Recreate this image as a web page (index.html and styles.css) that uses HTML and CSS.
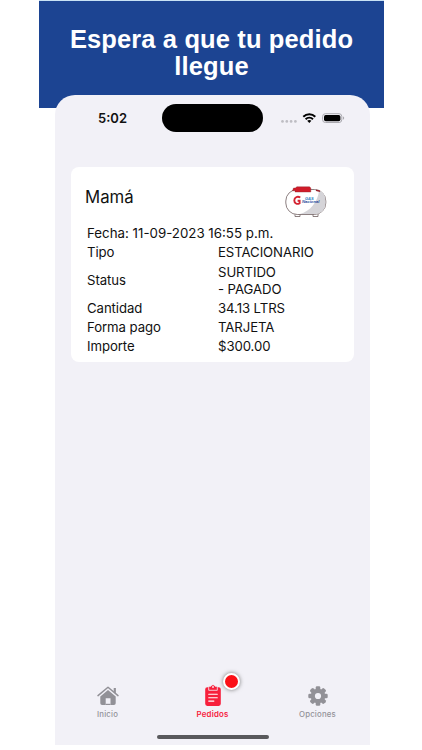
FILE: index.html
```html
<!DOCTYPE html>
<html lang="es">
<head>
<meta charset="utf-8">
<title>Pedidos</title>
<link rel="stylesheet" href="styles.css">
</head>
<body>
<main class="poster">
  <header class="banner">
    <h1>Espera a que tu pedido<br>llegue</h1>
  </header>
  <section class="phone">
    <div class="statusbar">
      <span class="time">5:02</span>
      <span class="island"></span>
      <svg class="signals" width="66" height="14" viewBox="0 0 66 14">
        <g fill="#bebdc3"><circle cx="2.5" cy="10.4" r="1.35"/><circle cx="6.8" cy="10.4" r="1.35"/><circle cx="11.1" cy="10.4" r="1.35"/><circle cx="15.4" cy="10.4" r="1.35"/></g>
        <g fill="none" stroke="#000" stroke-width="2"><path d="M23.3 5.8a8.6 8.6 0 0 1 12 0"/><path d="M25.6 8.2a5.4 5.4 0 0 1 7.4 0"/></g>
        <path d="M27.2 9.8a3.2 3.2 0 0 1 4.2 0l-2.1 2.2z"/>
        <rect x="42.6" y="2.7" width="19.2" height="8.8" rx="2.8" fill="none" stroke="#aaa9af"/>
        <rect x="44" y="4" width="16.4" height="6.2" rx="1.7"/>
        <path d="M63 5.5q1.2.4 1.2 1.6t-1.2 1.6z" fill="#aaa9af"/>
      </svg>
    </div>
    <article class="card">
      <div class="card-head">
        <h2>Mamá</h2>
        <svg class="tank" width="44" height="34" viewBox="0 0 44 34">
          <g fill="#fff" stroke="#705f61" stroke-width=".8"><path d="M11 28.500v3h5v-3M29 28.500v3h5v-3"/><rect x="1.800" y="4.500" width="40" height="25" rx="11.500"/></g>
          <path d="M35 5.600c4.500 1.500 6.400 5 6.400 10.400v2c0 7-4.500 11-10 11H16c10-2.500 18-12 19-23.400z" fill="#d5d4d8"/>
          <path d="M8.500 6l1-3h2l1.200-1.200h12.900l1.200 1.200v4H11V5.400z" fill="#d11b29" stroke="#8c2830" stroke-width=".4"/>
          <path d="M32 4.500l4.300 1-.5 1.600-3.800-1z" fill="#9a2630"/>
          <path d="M16.300 12.500c-3-1.700-6 .1-6 2.900s2.800 4.500 5.300 2.800v-2.400h-2" fill="none" stroke="#d42432" stroke-width="1.900"/>
          <text class="tank-small" x="21" y="14.500">GAS</text><text class="tank-brand" x="18" y="18.300">Nacional</text>
        </svg>
      </div>
      <p class="date">Fecha: 11-09-2023 16:55 p.m.</p>
      <dl class="details">
        <dt>Tipo</dt><dd>ESTACIONARIO</dd>
        <dt>Status</dt><dd>SURTIDO<br>- PAGADO</dd>
        <dt>Cantidad</dt><dd>34.13 LTRS</dd>
        <dt>Forma pago</dt><dd>TARJETA</dd>
        <dt>Importe</dt><dd>$300.00</dd>
      </dl>
    </article>
    <nav class="tabs">
      <a class="tab">
        <svg width="24" height="24" viewBox="0 0 24 24"><path d="M2 11.600L12 3.200l10 8.400" fill="none" stroke="currentColor" stroke-width="1.500" stroke-linecap="round" stroke-linejoin="round"/><path d="M17.700 4h2.200v5.500l-2.200-2z" fill="currentColor"/><path d="M4.300 12.400L12 6l7.700 6.400v6.800q0 1.800-1.800 1.800h-3.400v-6.800H9.700V21H6.100q-1.800 0-1.800-1.800z" fill="currentColor"/><path d="M9.700 19.800h4.800V21H9.700z" fill="currentColor"/></svg>
        <span>Inicio</span>
      </a>
      <a class="tab active">
        <svg width="24" height="24" viewBox="0 0 24 24"><path d="M6.300 3.200h11.400q2.100 0 2.100 2.100v14.500q0 2.100-2.100 2.100H6.300q-2.100 0-2.100-2.100V5.300q0-2.100 2.100-2.100z" fill="currentColor"/><path d="M7.700 6.300V3.300q0-1 1-1h1.100a2.300 2.300 0 0 1 4.400 0h1.100q1 0 1 1v3z" fill="currentColor" stroke="#f2f1f7" stroke-width=".8"/><circle cx="12" cy="3" r=".9" fill="#f2f1f7"/><path d="M7.700 10.300h8.600M7.700 13.700h8.600M7.700 17.100h5.200" stroke="#fff" stroke-width="1.100" stroke-linecap="round"/></svg>
        <span>Pedidos</span>
        <i class="badge"></i>
      </a>
      <a class="tab">
        <svg width="24" height="24" viewBox="0 0 24 24"><g fill="currentColor"><rect x="9.700" y="2.300" width="4.600" height="19.400" rx="1.300"/><rect x="9.700" y="2.300" width="4.600" height="19.400" rx="1.300" transform="rotate(45 12 12)"/><rect x="9.700" y="2.300" width="4.600" height="19.400" rx="1.300" transform="rotate(90 12 12)"/><rect x="9.700" y="2.300" width="4.600" height="19.400" rx="1.300" transform="rotate(135 12 12)"/><circle cx="12" cy="12" r="7.300"/></g><circle cx="12" cy="12" r="3.100" fill="#f2f1f7"/></svg>
        <span>Opciones</span>
      </a>
    </nav>
    <div class="home-bar"></div>
  </section>
</main>
</body>
</html>
```
FILE: styles.css
```css
* { box-sizing: border-box; }
body { margin: 0; background: #fff; color: #111; font-family: Inter, "Liberation Sans", sans-serif; overflow: hidden; }
h1, h2, p, dl, dd { margin: 0; font-weight: 400; }
.poster { width: 345px; height: 750px; margin-left: 39px; }
.banner { height: 108px; padding-top: 25px; background: #1c4492; border-top: 1px solid #c8e2f5; text-align: center; }
h1 { color: #fff; font: bold 25.5px/27px "Liberation Sans", Arial, sans-serif; letter-spacing: .12px; }
.phone { display: flex; flex-direction: column; width: 315px; height: 650px; margin: -13px auto 0 16px; border-radius: 20px 20px 0 0; background: #f2f1f7; }
.statusbar { display: grid; grid-template-columns: 107px 101px 1fr; align-items: center; height: 72px; padding-bottom: 27px; }
.time { padding-left: 43px; font-size: 13px; font-weight: 600; }
.island { width: 101px; height: 28px; border-radius: 14px; background: #000; }
.signals { margin-left: 17px; }
.card { width: 283px; height: 195px; margin-left: 16px; border-radius: 8px; background: #fff; }
.card-head { display: flex; justify-content: space-between; height: 58px; padding: 18px 26px 0 14px; }
h2 { font-size: 16.8px; line-height: 25px; }
.tank-small { font: italic bold 4px "Liberation Sans", sans-serif; fill: #277bc0; }
.tank-brand { font: italic bold 4.2px "Liberation Sans", sans-serif; fill: #244b9b; }
.date { padding-left: 16px; font-size: 13.3px; line-height: 17px; white-space: nowrap; }
.details { display: grid; grid-template-columns: 131px 1fr; align-items: center; row-gap: 2.3px; margin-top: 2.3px; padding-left: 16px; font-size: 13.2px; line-height: 17px; letter-spacing: -.08px; }
.tabs { display: grid; grid-template-columns: repeat(3, 1fr); height: 51px; margin-top: auto; }
.tab { position: relative; display: flex; flex-direction: column; align-items: center; color: #929197; font-size: 7.8px; font-weight: 500; line-height: 10px; letter-spacing: .2px; }
.tab span { margin-top: 1px; }
.active { color: #f7203c; font-weight: 600; }
.badge { position: absolute; left: 63px; top: -11px; width: 17px; height: 17px; border: 2px solid #fff; border-radius: 50%; background: #fb1017; box-shadow: 0 0 4px #777; }
.home-bar { width: 112px; height: 4px; margin: 0 auto 6px 102px; border-radius: 2px; background: #59595c; }
```
